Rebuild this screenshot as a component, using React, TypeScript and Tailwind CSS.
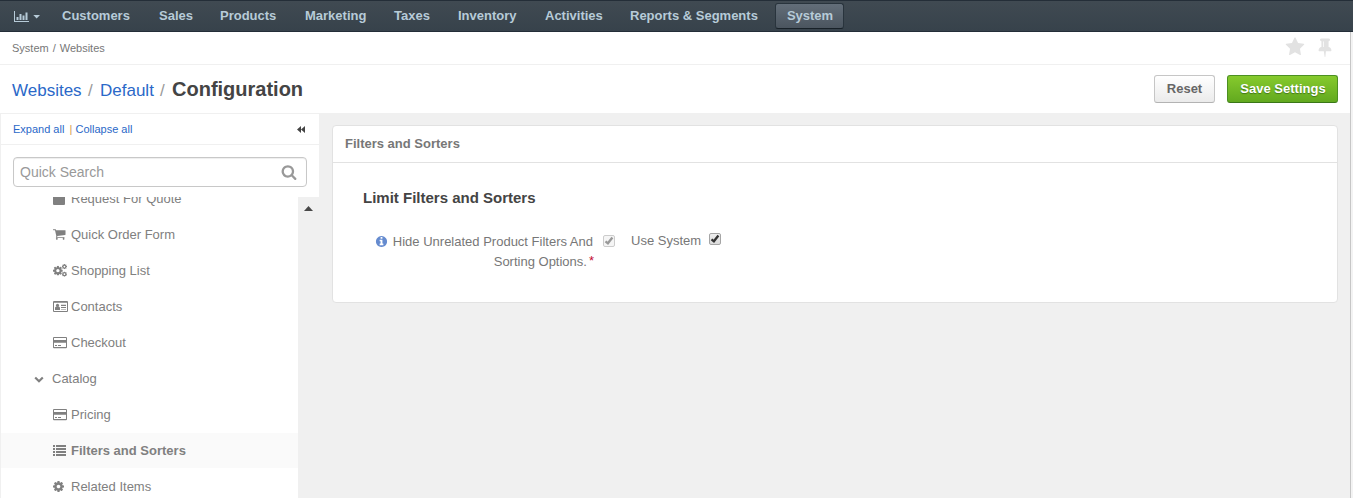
import type { ReactNode } from 'react';

const paths = {
  star: 'M1728 647q0 22-26 48l-363 354 86 500q1 7 1 20 0 21-10.5 35.5t-30.5 14.5q-19 0-40-12l-449-236-449 236q-22 12-40 12-21 0-31.5-14.5t-10.5-35.5q0-6 2-20l86-500-364-354q-25-27-25-48 0-37 56-46l502-73 225-455q19-41 49-41t49 41l225 455 502 73q56 9 56 46z',
  pin: 'M800 864v-448q0-14-9-23t-23-9-23 9-9 23v448q0 14 9 23t23 9 23-9 9-23zm672 352q0 26-19 45t-45 19h-429l-51 483q-2 12-10.5 20.5t-20.5 8.5h-1q-27 0-32-27l-76-485h-404q-26 0-45-19t-19-45q0-123 78.5-221.5t177.5-98.5v-512q-52 0-90-38t-38-90 38-90 90-38h640q52 0 90 38t38 90-38 90-90 38v512q99 0 177.5 98.5t78.5 221.5z',
  search: 'M1216 832q0-185-131.5-316.5t-316.5-131.5-316.5 131.5-131.5 316.5 131.5 316.5 316.5 131.5 316.5-131.5 131.5-316.5zm512 832q0 52-38 90t-90 38q-54 0-90-38l-343-342q-179 124-399 124-143 0-273.5-55.5t-225-150-150-225-55.5-273.5 55.5-273.5 150-225 225-150 273.5-55.5 273.5 55.5 225 150 150 225 55.5 273.5q0 220-124 399l343 343q37 37 37 90z',
  cart: 'M704 1536q0 52-38 90t-90 38-90-38-38-90 38-90 90-38 90 38 38 90zm896 0q0 52-38 90t-90 38-90-38-38-90 38-90 90-38 90 38 38 90zm128-1088v512q0 24-16.5 42.5t-40.5 21.5l-1044 122q13 60 13 70 0 16-24 64h920q26 0 45 19t19 45-19 45-45 19h-1024q-26 0-45-19t-19-45q0-11 8-31.5t16-36 21.5-40 15.5-29.5l-177-823h-204q-26 0-45-19t-19-45 19-45 45-19h256q16 0 28.5 6.5t19.5 15.5 13 24.5 8 26 5.5 29.5 4.5 26h1201q26 0 45 19t19 45z',
  cog: 'M1152 896q0-106-75-181t-181-75-181 75-75 181 75 181 181 75 181-75 75-181zm512-109v222q0 12-8 23t-20 13l-185 28q-19 54-39 91 35 50 107 138 10 12 10 25t-9 23q-27 37-99 108t-94 71q-12 0-26-9l-138-108q-44 23-91 38-16 136-29 186-7 28-36 28h-222q-14 0-24.5-8.5t-11.5-21.5l-28-184q-49-16-90-37l-141 107q-10 9-25 9-14 0-25-11-126-114-165-168-7-10-7-23 0-12 8-23 15-21 51-66.5t54-70.5q-27-50-41-99l-183-27q-13-2-21-12.5t-8-23.5v-222q0-12 8-23t19-13l186-28q14-46 39-92-40-57-107-138-10-12-10-24 0-10 9-23 26-36 98.5-107.5t94.5-71.5q13 0 26 10l138 107q44-23 91-38 16-136 29-186 7-28 36-28h222q14 0 24.5 8.5t11.5 21.5l28 184q49 16 90 37l142-107q9-9 24-9 13 0 25 10 129 119 165 170 7 8 7 22 0 12-8 23-15 21-51 66.5t-54 70.5q26 50 41 98l183 28q13 2 21 12.5t8 23.5z',
  info: 'M1152 1376v-160q0-14-9-23t-23-9h-96v-512q0-14-9-23t-23-9h-320q-14 0-23 9t-9 23v160q0 14 9 23t23 9h96v320h-96q-14 0-23 9t-9 23v160q0 14 9 23t23 9h448q14 0 23-9t9-23zm-128-896v-160q0-14-9-23t-23-9h-192q-14 0-23 9t-9 23v160q0 14 9 23t23 9h192q14 0 23-9t9-23zm640 416q0 209-103 385.5t-279.5 279.5-385.5 103-385.5-103-279.5-279.5-103-385.5 103-385.5 279.5-279.5 385.5-103 385.5 103 279.5 279.5 103 385.5z',
};

function Glyph({ name, className, viewBox = '0 0 1792 1792' }: { name: keyof typeof paths; className: string; viewBox?: string }) {
  return (
    <svg viewBox={viewBox} className={className} fill="currentColor">
      <path d={paths[name]} />
    </svg>
  );
}

const Cogs = () => (
  <svg width="14" height="13" viewBox="0 0 14 13" fill="currentColor">
    <svg x="0" y="1.800" width="9.800" height="9.800" viewBox="128 128 1536 1536">
      <path d={paths.cog} />
    </svg>
    <svg x="8.800" y="0" width="5.200" height="5.200" viewBox="128 128 1536 1536">
      <path d={paths.cog} />
    </svg>
    <svg x="8.800" y="7.600" width="5.200" height="5.200" viewBox="128 128 1536 1536">
      <path d={paths.cog} />
    </svg>
  </svg>
);

const CreditCard = () => (
  <svg width="14" height="12" viewBox="0 0 14 12" fill="currentColor" className="translate-y-px">
    <path fillRule="evenodd" d="M1 0h12a1 1 0 0 1 1 1v9.200a1 1 0 0 1-1 1H1a1 1 0 0 1-1-1V1a1 1 0 0 1 1-1zM1 1v2h12V1zM1 5.800v4.300h12V5.800z" />
    <path d="M2 8h2v1H2zM5 8h3v1H5z" />
  </svg>
);

const ContactCard = () => (
  <svg width="15" height="12" viewBox="0 0 15 12" fill="currentColor" className="translate-y-px">
    <path fillRule="evenodd" d="M1 0h13a1 1 0 0 1 1 1v9a1 1 0 0 1-1 1H1a1 1 0 0 1-1-1V1a1 1 0 0 1 1-1zM1 1.700v8.300h13V1.700z" />
    <circle cx="4.500" cy="4.400" r="1.600" />
    <path d="M2 9V7.200c0-1 .6-1.800 1.300-1.800.6.500 1.800.5 2.400 0 .7 0 1.300.8 1.300 1.800V9zM8 3.800h5V5H8zM8 6h5v1H8zM8 8h5v.6H8z" />
  </svg>
);

const ListIcon = () => (
  <svg width="13" height="12" viewBox="0 0 13 12" fill="currentColor" className="translate-y-px">
    <path d="M0 0h2v2H0zM3 0h10v2H3zM0 3h2v2H0zM3 3h10v2H3zM0 6h2v2H0zM3 6h10v2H3zM0 9h2v2H0zM3 9h10v2H3z" />
  </svg>
);

const menu = [
  ['Customers', 'w-[97px]'],
  ['Sales', 'w-[61px]'],
  ['Products', 'w-[85px]'],
  ['Marketing', 'w-[89px]'],
  ['Taxes', 'w-[64px]'],
  ['Inventory', 'w-[87px]'],
  ['Activities', 'w-[85px]'],
  ['Reports & Segments', 'w-[145px]'],
];

function TreeItem({ icon, label, active = false }: { icon: ReactNode; label: string; active?: boolean }) {
  return (
    <li className="flex h-9 shrink-0 items-center">
      <div className={`flex h-[35px] w-[297px] items-center pl-[52px] ${active ? 'bg-[#fafafa] font-bold' : ''}`}>
        <span className="flex w-[18px] shrink-0 items-center">{icon}</span>
        <span className="pt-[2px]">{label}</span>
      </div>
    </li>
  );
}

function Checkbox({ disabled = false }: { disabled?: boolean }) {
  return (
    <span
      className={`flex h-3 w-3 items-center justify-center rounded-[2px] border ${
        disabled ? 'border-[#ccc] bg-[#f5f5f5] text-[#999]' : 'border-[#a5a5a5] bg-linear-to-b from-[#eee] to-[#dcdcdc] text-[#333]'
      }`}
    >
      <svg width="10" height="10" viewBox="0 0 10 10" fill="none" stroke="currentColor" strokeWidth="2.300">
        <path d="M1.500 5.300 3.900 7.300 8.400 1.500" />
      </svg>
    </span>
  );
}

export default function App() {
  return (
    <div className="flex h-[498px] w-[1353px] flex-col overflow-hidden bg-[#f0f0f0] font-['Liberation_Sans',Arial,sans-serif] text-[13px] leading-5 text-[#777]">
      <nav className="flex h-8 shrink-0 border-y border-[#242e38] bg-linear-to-b from-[#404a52] to-[#37424b] font-bold text-[#b7cbd8]">
        <div className="flex w-[62px] items-center pt-[2px] pl-[14px]">
          <svg width="28" height="12" viewBox="0 0 28 12" fill="currentColor">
            <path d="M0 0h1v10h14v1H0zM2.500 6h2v3h-2zM5.500 3h2v6h-2zM8.500 4.500h2V9h-2zM11.500 1.500h2V9h-2zM19.300 4h6.700l-3.350 3.500z" />
          </svg>
        </div>
        {menu.map(([label, width]) => (
          <span key={label} className={`${width} pt-[5px] whitespace-nowrap`}>{label}</span>
        ))}
        <span className="mt-[2px] flex h-[26px] w-[69px] items-center justify-center rounded-[3px] border border-[#29343d] border-b-[#182128] bg-linear-to-b from-[#636e79] to-[#4b555f] pl-px">
          System
        </span>
      </nav>
      <div className="flex min-h-0 grow">
        <div className="flex w-[1350px] shrink-0 flex-col">
          <div className="flex h-[33px] shrink-0 items-center justify-between border-b border-[#f0f0f0] bg-white pr-[15px] pl-3 text-[11px]">
            <span className="whitespace-pre">System<span className="mx-[4px]">/</span>Websites</span>
            <span className="flex items-center gap-[10px] text-[#e2e2e2]">
              <Glyph name="star" className="-mt-[2px] h-[20px] w-[20px]" />
              <Glyph name="pin" className="-mt-[2px] h-[20px] w-[20px]" />
            </span>
          </div>
          <header className="flex h-12 shrink-0 items-center bg-white pr-3 pl-3">
            <h1 className="flex grow items-baseline pt-[2px] text-[17px] text-[#2a68c8]">
              <span className="w-[76px]">Websites</span>
              <span className="w-3 text-[#999]">/</span>
              <span className="w-[60px]">Default</span>
              <span className="w-3 text-[#999]">/</span>
              <span className="text-[20px] font-bold text-[#444]">Configuration</span>
            </h1>
            <button className="mr-3 h-7 w-[61px] rounded-[3px] border border-[#c6c6c6] border-b-[#b3b3b3] bg-linear-to-b from-white to-[#ebebeb] font-bold text-[#666]">
              Reset
            </button>
            <button className="h-7 w-[111px] rounded-[3px] border border-[#4c9022] border-b-[#397717] bg-linear-to-b from-[#86ca2d] to-[#62a91f] pl-px font-bold text-white [text-shadow:0_1px_1px_#427718]">
              Save Settings
            </button>
          </header>
          <div className="flex min-h-0 grow">
            <aside className="flex w-[319px] shrink-0 flex-col border-t border-l border-[#f0f0f0]">
              <div className="flex h-[31px] shrink-0 items-center justify-between border-b border-[#f0f0f0] bg-white pr-[14px] pl-3 text-[11px] text-[#2a68c8]">
                <span className="flex">
                  <span className="w-[56.500px]">Expand all</span>
                  <span className="w-[6px] text-[#d39a50]">|</span>
                  <span>Collapse all</span>
                </span>
                <svg width="8" height="7" viewBox="0 0 8 7" fill="#444">
                  <path d="M4 0v7L0 3.500zM8 0v7L4 3.500z" />
                </svg>
              </div>
              <div className="h-[52px] shrink-0 bg-white pt-3 pl-3">
                <div className="flex h-[30px] w-[294px] items-center justify-between rounded-[4px] border border-[#c8c8c8] pr-[9px] pl-[6px] text-[14px] text-[#999] shadow-[inset_0_1px_1px_#eee]">
                  Quick Search
                  <Glyph name="search" className="-mt-px h-[16px] w-[16px]" />
                </div>
              </div>
              <div className="flex min-h-0 grow overflow-hidden">
                <ul className="-mt-[17px] flex w-[297px] flex-col bg-white text-[#808080] [clip-path:inset(17px_0_0_0)]">
                  <TreeItem label="Request For Quote" icon={<span className="h-[11px] w-3 translate-y-px rounded-[1px] bg-[#808080]" />} />
                  <TreeItem label="Quick Order Form" icon={<Glyph name="cart" viewBox="64 0 1728 1792" className="h-[14px] w-[13px]" />} />
                  <TreeItem label="Shopping List" icon={<Cogs />} />
                  <TreeItem label="Contacts" icon={<ContactCard />} />
                  <TreeItem label="Checkout" icon={<CreditCard />} />
                  <li className="flex h-9 shrink-0 items-center pl-[33px]">
                    <svg width="11" height="8" viewBox="0 0 11 8" className="mt-[4px] mr-[7px]" fill="none" stroke="currentColor" strokeWidth="2.200">
                      <path d="M1.200 1.500 5 5.200 8.800 1.500" />
                    </svg>
                    <span className="pt-px">Catalog</span>
                  </li>
                  <TreeItem label="Pricing" icon={<CreditCard />} />
                  <TreeItem label="Filters and Sorters" icon={<ListIcon />} active />
                  <TreeItem label="Related Items" icon={<Glyph name="cog" viewBox="128 128 1536 1536" className="h-[11px] w-[11px]" />} />
                </ul>
                <div className="flex grow justify-start pt-[9px] pl-[6px]">
                  <svg width="9" height="5" viewBox="0 0 9 5" fill="#484848">
                    <path d="M4.500 0 9 5H0z" />
                  </svg>
                </div>
              </div>
            </aside>
            <main className="grow pt-3 pl-[13px]">
              <section className="h-[178px] w-[1006px] rounded-[4px] border border-[#e2e2e2] bg-white">
                <h2 className="h-[37px] border-b border-[#e2e2e2] pt-2 pl-3 font-bold">Filters and Sorters</h2>
                <h3 className="mt-[25px] pl-[30px] text-[15px] font-bold text-[#444]">Limit Filters and Sorters</h3>
                <div className="mt-6 flex items-start">
                  <div className="flex w-[270px] shrink-0 flex-col items-end pr-[10px]">
                    <div className="flex items-center whitespace-nowrap">
                      <Glyph name="info" className="mr-[4.500px] h-[13px] w-[13px] -translate-y-px text-[#658bcf]" />
                      Hide Unrelated Product Filters And
                    </div>
                    <div className="flex">Sorting Options.<span className="ml-[2px] -mt-px -mr-px text-[#c30d30]">*</span></div>
                  </div>
                  <div className="pt-[3px]"><Checkbox disabled /></div>
                  <span className="-mt-px ml-4 w-[78px]">Use System</span>
                  <div className="pt-px"><Checkbox /></div>
                </div>
              </section>
            </main>
          </div>
        </div>
        <div className="w-[3px] border-l border-[#c6c6c6] bg-[#f3f3f3]" />
      </div>
    </div>
  );
}
